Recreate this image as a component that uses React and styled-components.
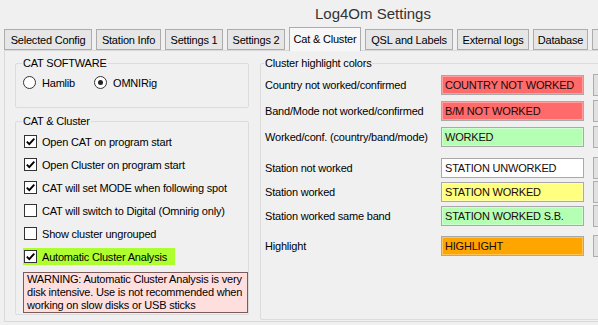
import React from 'react';
import styled, { createGlobalStyle } from 'styled-components';

const GlobalStyle = createGlobalStyle`
  html, body {
    margin: 0;
    padding: 0;
    background: #f0f0f0;
  }
  body {
    font-family: "Liberation Sans", Arial, sans-serif;
    font-size: 11px;
    letter-spacing: -0.2px;
    color: #000;
    overflow: hidden;
  }
`;

const tabs = [
  { label: 'Selected Config', w: 88 },
  { label: 'Station Info', w: 65 },
  { label: 'Settings 1', w: 58 },
  { label: 'Settings 2', w: 58 },
  { label: 'Cat & Cluster', w: 72, active: true },
  { label: 'QSL and Labels', w: 88 },
  { label: 'External logs', w: 72 },
  { label: 'Database', w: 55 },
  { label: '', w: 40 },
];

const checks = [
  { label: 'Open CAT on program start', checked: true },
  { label: 'Open Cluster on program start', checked: true },
  { label: 'CAT will set MODE when following spot', checked: true },
  { label: 'CAT will switch to Digital (Omnirig only)', checked: false },
  { label: 'Show cluster ungrouped', checked: false },
  { label: 'Automatic Cluster Analysis', checked: true, highlight: '#adff2f' },
];

const colorRows = [
  { label: 'Country not worked/confirmed', text: 'COUNTRY NOT WORKED', color: '#ff6b6b', gap: 0 },
  { label: 'Band/Mode not worked/confirmed', text: 'B/M NOT WORKED', color: '#ff6b6b', gap: 4 },
  { label: 'Worked/conf. (country/band/mode)', text: 'WORKED', color: '#b4ffb4', gap: 4 },
  { label: 'Station not worked', text: 'STATION UNWORKED', color: '#ffffff', gap: 9 },
  { label: 'Station worked', text: 'STATION WORKED', color: '#ffff80', gap: 2 },
  { label: 'Station worked same band', text: 'STATION WORKED S.B.', color: '#b4ffb4', gap: 2 },
  { label: 'Highlight', text: 'HIGHLIGHT', color: '#ffa500', gap: 8 },
];

const CheckMark = () => (
  <svg width="11" height="11" viewBox="0 0 11 11">
    <path d="M1.8 5.6 L4.3 8.1 L9.3 2.6" fill="none" stroke="#000" strokeWidth="1.9" />
  </svg>
);

const App = () => (
  <Window>
    <GlobalStyle />
    <TitleBar>Log4Om Settings</TitleBar>
    <TabStrip>
      {tabs.map((t, i) => (
        <Tab key={i} w={t.w} active={t.active}>
          {t.label}
        </Tab>
      ))}
    </TabStrip>
    <TabPage>
      <LeftCol>
        <GroupBox pad="6px 0 18px 7px">
          <Legend>CAT SOFTWARE</Legend>
          <RadioRow>
            <RadioItem>
              <RadioCircle />
              Hamlib
            </RadioItem>
            <RadioItem>
              <RadioCircle selected />
              OMNIRig
            </RadioItem>
          </RadioRow>
        </GroupBox>
        <GroupBox pad="2px 0 1px 7px">
          <Legend>CAT &amp; Cluster</Legend>
          {checks.map((c) => (
            <CheckRow key={c.label}>
              <CheckItem bg={c.highlight}>
                <CheckBox>{c.checked && <CheckMark />}</CheckBox>
                {c.label}
              </CheckItem>
            </CheckRow>
          ))}
          <Warning>
            WARNING: Automatic Cluster Analysis is very
            <br />
            disk intensive. Use is not recommended when
            <br />
            working on slow disks or USB sticks
          </Warning>
        </GroupBox>
      </LeftCol>
      <ColorsGroup>
        <Legend>Cluster highlight colors</Legend>
        {colorRows.map((r) => (
          <ColorRow key={r.label} gap={r.gap}>
            <RowLabel>{r.label}</RowLabel>
            <ColorBox color={r.color}>{r.text}</ColorBox>
            <PickButton />
          </ColorRow>
        ))}
      </ColorsGroup>
    </TabPage>
  </Window>
);

export default App;

const Window = styled.div`
  width: 598px;
  height: 325px;
  overflow: hidden;
  background: #f0f0f0;
`;

const TitleBar = styled.div`
  height: 27px;
  display: flex;
  align-items: center;
  padding-left: 315px;
  font-size: 15px;
  letter-spacing: 0;
  color: #333;
`;

const TabStrip = styled.div`
  display: flex;
  align-items: flex-end;
  gap: 4px;
  height: 23px;
  padding-left: 4px;
  position: relative;
  z-index: 1;
`;

const Tab = styled.div`
  flex: none;
  box-sizing: border-box;
  width: ${({ w }) => w}px;
  height: ${({ active }) => (active ? 24 : 21)}px;
  margin-bottom: ${({ active }) => (active ? -1 : 0)}px;
  display: flex;
  align-items: center;
  justify-content: center;
  white-space: nowrap;
  border: 1px solid #acacac;
  border-bottom: ${({ active }) => (active ? 'none' : '1px solid #acacac')};
  background: ${({ active }) => (active ? '#f7f7f7' : '#e6e6e6')};
  padding-bottom: ${({ active }) => (active ? 2 : 0)}px;
`;

const TabPage = styled.div`
  display: flex;
  align-items: flex-start;
  gap: 11px;
  margin-left: 4px;
  width: 640px;
  height: 263px;
  padding: 6px 0 1px 10px;
  border: 1px solid #d9d9d9;
`;

const LeftCol = styled.div`
  width: 234px;
  flex: none;
  display: flex;
  flex-direction: column;
  gap: 7px;
`;

const GroupBox = styled.fieldset`
  margin: 0;
  min-width: 0;
  padding: ${({ pad }) => pad};
  border: 1px solid #dcdcdc;
  border-radius: 2px;
`;

const Legend = styled.legend`
  padding: 0 1px;
  margin-left: -1px;
  line-height: 13px;
  color: #000;
`;

const RadioRow = styled.div`
  display: flex;
  align-items: center;
  gap: 19px;
  height: 13px;
`;

const RadioItem = styled.label`
  display: flex;
  align-items: center;
  gap: 6px;
`;

const RadioCircle = styled.span`
  width: 13px;
  height: 13px;
  box-sizing: border-box;
  border-radius: 50%;
  border: 1px solid #333;
  background: #fff;
  display: flex;
  align-items: center;
  justify-content: center;

  &::after {
    content: '';
    width: 5px;
    height: 5px;
    border-radius: 50%;
    background: ${({ selected }) => (selected ? '#222' : 'transparent')};
  }
`;

const CheckRow = styled.div`
  height: 23px;
  display: flex;
  align-items: center;
`;

const CheckItem = styled.label`
  display: inline-flex;
  align-items: center;
  gap: 5px;
  height: 17px;
  padding: 0 8px 0 1px;
  background: ${({ bg }) => bg || 'transparent'};
  white-space: nowrap;
`;

const CheckBox = styled.span`
  width: 13px;
  height: 13px;
  box-sizing: border-box;
  border: 1px solid #333;
  background: #fff;
  display: flex;
  align-items: center;
  justify-content: center;
`;

const Warning = styled.div`
  margin: 4px 0 0 0;
  padding: 0 3px;
  line-height: 13px;
  white-space: nowrap;
  overflow: hidden;
  background: #ffdede;
  border: 1px solid #7a5c5c;
`;

const ColorsGroup = styled.fieldset`
  margin: 0;
  flex: 1;
  align-self: stretch;
  padding: 4px 0 0 4px;
  border: 1px solid #dcdcdc;
  border-radius: 2px;
`;

const ColorRow = styled.div`
  display: grid;
  grid-template-columns: 176px 143px 40px;
  align-items: center;
  height: 22px;
  margin-top: ${({ gap }) => gap}px;
`;

const RowLabel = styled.span`
  white-space: nowrap;
`;

const ColorBox = styled.div`
  box-sizing: border-box;
  height: 20px;
  display: flex;
  align-items: center;
  padding-left: 3px;
  white-space: nowrap;
  overflow: hidden;
  color: #1a0a0a;
  background: ${({ color }) => color};
  border: 1px solid #a9a9a9;
  box-shadow: inset 0 0 0 1px rgba(255, 255, 255, 0.35);
`;

const PickButton = styled.div`
  box-sizing: border-box;
  height: 22px;
  margin-left: 9px;
  background: #e1e1e1;
  border: 1px solid #adadad;
`;
